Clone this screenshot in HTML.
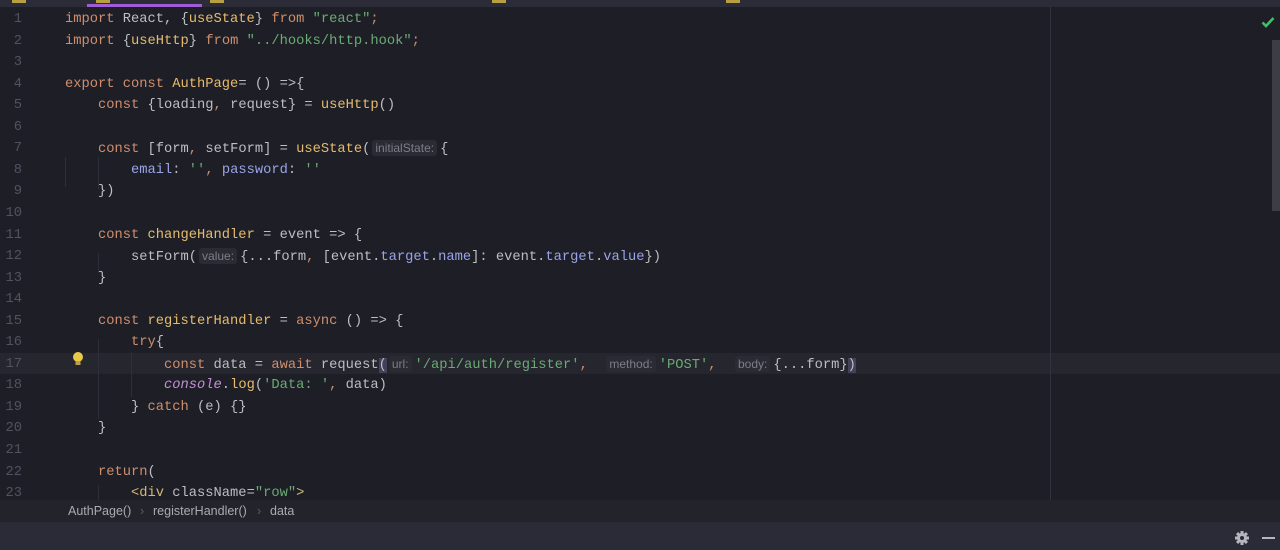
<!DOCTYPE html>
<html><head><meta charset="utf-8"><style>
*{margin:0;padding:0;box-sizing:border-box}
html,body{width:1280px;height:550px;overflow:hidden;background:#1e1f26}
.top{position:absolute;left:0;top:0;width:1280px;height:7px;background:#2b2c37}
.tabline{position:absolute;left:87px;top:4px;width:115px;height:3px;background:#a05cd6}
.ti{position:absolute;top:0;width:14px;height:3px;background:#b8a040}
.ed{position:absolute;left:0;top:7px;width:1280px;height:493px;background:#1e1f26;overflow:hidden}
.cur{position:absolute;left:0;top:346px;width:1280px;height:21px;background:#25262e}
.rm{position:absolute;left:1050px;top:0;width:1px;height:493px;background:#32333d}
.line{position:absolute;left:0;height:21.55px;line-height:21.55px;font-family:"Liberation Mono",monospace;font-size:13.75px;color:#bcbec4;white-space:pre}
.n{position:absolute;left:0;width:22px;text-align:right;color:#4f5360}
.c{position:absolute;left:65px}
.k{color:#cf8e6d}.f{color:#e6bb6d}.s{color:#6aab73}.p{color:#9aa3e8}.i{color:#c38fd6;font-style:italic}.t{color:#d5b778}
.h{font-family:"Liberation Sans",sans-serif;font-size:12px;color:#7b7e88;background:#2a2b33;border-radius:3px;padding:1px 3px;margin:0 3px 0 2px}
.guide{position:absolute;width:1px;background:#2e2f38}
.bc{position:absolute;left:0;top:500px;width:1280px;height:22px;background:#22232b;font-family:"Liberation Sans",sans-serif;font-size:12.5px;color:#a9abb3;line-height:22px}
.bot{position:absolute;left:0;top:522px;width:1280px;height:28px;background:#2a2b36}
.sb{position:absolute;left:1272px;top:33px;width:8px;height:171px;background:#3c3d45}
</style></head><body>
<div class="top"><div class="ti" style="left:12px"></div><div class="tabline"></div><div class="ti" style="left:96px"></div><div class="ti" style="left:210px"></div><div class="ti" style="left:492px"></div><div class="ti" style="left:726px"></div></div>
<div class="ed">
<div class="cur"></div>
<div class="rm"></div>
<div class="guide" style="left:65px;top:150px;height:30px"></div>
<div class="guide" style="left:98px;top:150px;height:32px"></div>
<div class="guide" style="left:98px;top:246px;height:20px"></div>
<div class="guide" style="left:98px;top:332px;height:80px"></div>
<div class="guide" style="left:131px;top:345px;height:45px"></div>
<div class="guide" style="left:98px;top:478px;height:20px"></div>
<svg style="position:absolute;left:71px;top:344px" width="14" height="16" viewBox="0 0 14 16"><circle cx="7" cy="6" r="5" fill="#e8c94a"/><rect x="4.5" y="10" width="5" height="4" fill="#b9a050"/></svg>
<svg style="position:absolute;left:1261px;top:9px" width="14" height="12" viewBox="0 0 14 12"><path d="M1.5 6.5 L5 10 L12.5 2" stroke="#3fbf6a" stroke-width="2.6" fill="none"/></svg>
<div class="sb"></div>
</div>
<div id="code" style="position:absolute;left:0;top:9px">
<div class="line" style="top:0"><span class="n">1</span><span class="c"><span class="k">import</span> React, {<span class="f">useState</span>} <span class="k">from</span> <span class="s">"react"</span><span class="k">;</span></span></div>
<div class="line" style="top:21.55px"><span class="n">2</span><span class="c"><span class="k">import</span> {<span class="f">useHttp</span>} <span class="k">from</span> <span class="s">"../hooks/http.hook"</span><span class="k">;</span></span></div>
<div class="line" style="top:43.1px"><span class="n">3</span></div>
<div class="line" style="top:64.65px"><span class="n">4</span><span class="c"><span class="k">export const</span> <span class="f">AuthPage</span>= () =>{</span></div>
<div class="line" style="top:86.2px"><span class="n">5</span><span class="c">    <span class="k">const</span> {loading<span class="k">,</span> request} = <span class="f">useHttp</span>()</span></div>
<div class="line" style="top:107.75px"><span class="n">6</span></div>
<div class="line" style="top:129.3px"><span class="n">7</span><span class="c">    <span class="k">const</span> [form<span class="k">,</span> setForm] = <span class="f">useState</span>(<span class="h">initialState:</span>{</span></div>
<div class="line" style="top:150.85px"><span class="n">8</span><span class="c">        <span class="p">email</span>: <span class="s">''</span><span class="k">,</span> <span class="p">password</span>: <span class="s">''</span></span></div>
<div class="line" style="top:172.4px"><span class="n">9</span><span class="c">    })</span></div>
<div class="line" style="top:193.95px"><span class="n">10</span></div>
<div class="line" style="top:215.5px"><span class="n">11</span><span class="c">    <span class="k">const</span> <span class="f">changeHandler</span> = event => {</span></div>
<div class="line" style="top:237.05px"><span class="n">12</span><span class="c">        setForm(<span class="h">value:</span>{...form<span class="k">,</span> [event.<span class="p">target</span>.<span class="p">name</span>]: event.<span class="p">target</span>.<span class="p">value</span>})</span></div>
<div class="line" style="top:258.6px"><span class="n">13</span><span class="c">    }</span></div>
<div class="line" style="top:280.15px"><span class="n">14</span></div>
<div class="line" style="top:301.7px"><span class="n">15</span><span class="c">    <span class="k">const</span> <span class="f">registerHandler</span> = <span class="k">async</span> () => {</span></div>
<div class="line" style="top:323.25px"><span class="n">16</span><span class="c">        <span class="k">try</span>{</span></div>
<div class="line" style="top:344.8px"><span class="n">17</span><span class="c">            <span class="k">const</span> data = <span class="k">await</span> request<span style="background:#43405a">(</span><span class="h">url:</span><span class="s">'/api/auth/register'</span><span class="k">,</span>  <span class="h">method:</span><span class="s">'POST'</span><span class="k">,</span>  <span class="h">body:</span>{...form}<span style="background:#43405a">)</span></span></div>
<div class="line" style="top:366.35px"><span class="n">18</span><span class="c">            <span class="i">console</span>.<span class="f">log</span>(<span class="s">'Data: '</span><span class="k">,</span> data)</span></div>
<div class="line" style="top:387.9px"><span class="n">19</span><span class="c">        } <span class="k">catch</span> (e) {}</span></div>
<div class="line" style="top:409.45px"><span class="n">20</span><span class="c">    }</span></div>
<div class="line" style="top:431px"><span class="n">21</span></div>
<div class="line" style="top:452.55px"><span class="n">22</span><span class="c">    <span class="k">return</span>(</span></div>
<div class="line" style="top:474.1px"><span class="n">23</span><span class="c">        <span class="t">&lt;div</span> <span class="p" style="color:#bcbec4">className</span>=<span class="s">"row"</span><span class="t">&gt;</span></span></div>
</div>
<div class="bc"><span style="position:absolute;left:68px">AuthPage()</span><span style="position:absolute;left:140px;color:#5a5d68">›</span><span style="position:absolute;left:153px">registerHandler()</span><span style="position:absolute;left:257px;color:#5a5d68">›</span><span style="position:absolute;left:270px">data</span></div>
<div class="bot">
<svg style="position:absolute;left:1235px;top:9px" width="14" height="14" viewBox="0 0 14 14"><g fill="#b4b6c0"><circle cx="7" cy="7" r="5"/><rect x="5.5" y="0" width="3" height="14"/><rect x="0" y="5.5" width="14" height="3"/><rect x="5.5" y="0" width="3" height="14" transform="rotate(45 7 7)"/><rect x="5.5" y="0" width="3" height="14" transform="rotate(-45 7 7)"/></g><circle cx="7" cy="7" r="2" fill="#2a2b36"/></svg>
<div style="position:absolute;left:1262px;top:15px;width:13px;height:2px;background:#b4b6c0"></div>
</div>
</body></html>
